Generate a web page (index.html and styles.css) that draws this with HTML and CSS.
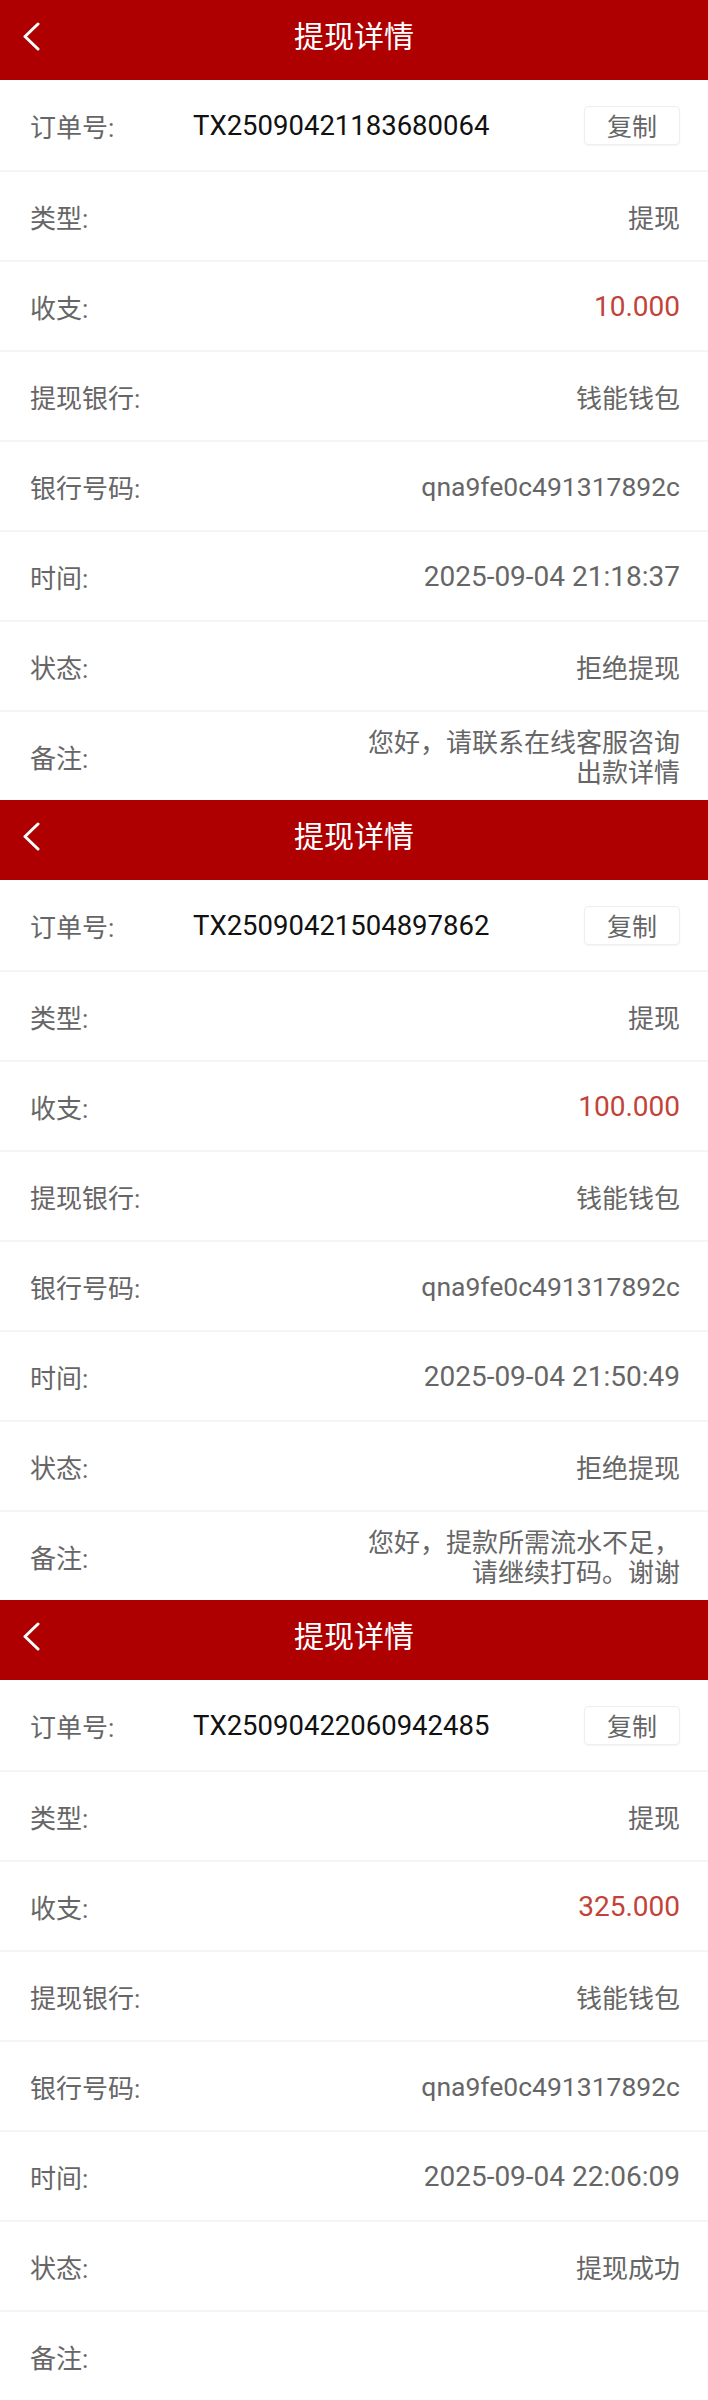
FILE: index.html
```html
<!DOCTYPE html>
<html lang="zh-CN">
  <head>
    <meta charset="UTF-8" />
    <meta name="viewport" content="width=device-width, initial-scale=1.0" />
    <title>提现详情</title>
    <link rel="stylesheet" href="styles.css">
  </head>
  <body>
    <!-- Record 1 -->
    <section class="detail">
      <header class="topbar">
        <svg class="back" width="20" height="30" viewBox="0 0 20 30"><polyline points="16,3 3,15.5 16,28" /></svg>
        <h1>提现详情</h1>
      </header>
      <div class="row">
        <span class="label">订单号:</span>
        <span class="order num">TX25090421183680064</span>
        <button class="copy">复制</button>
      </div>
      <div class="row"><span class="label">类型:</span><span class="value">提现</span></div>
      <div class="row"><span class="label">收支:</span><span class="value num amount">10.000</span></div>
      <div class="row"><span class="label">提现银行:</span><span class="value">钱能钱包</span></div>
      <div class="row"><span class="label">银行号码:</span><span class="value num code">qna9fe0c491317892c</span></div>
      <div class="row"><span class="label">时间:</span><span class="value num">2025-09-04 21:18:37</span></div>
      <div class="row"><span class="label">状态:</span><span class="value">拒绝提现</span></div>
      <div class="row"><span class="label">备注:</span><span class="value note">您好，请联系在线客服咨询出款详情</span></div>
    </section>

    <!-- Record 2 -->
    <section class="detail">
      <header class="topbar">
        <svg class="back" width="20" height="30" viewBox="0 0 20 30"><polyline points="16,3 3,15.5 16,28" /></svg>
        <h1>提现详情</h1>
      </header>
      <div class="row">
        <span class="label">订单号:</span>
        <span class="order num">TX25090421504897862</span>
        <button class="copy">复制</button>
      </div>
      <div class="row"><span class="label">类型:</span><span class="value">提现</span></div>
      <div class="row"><span class="label">收支:</span><span class="value num amount">100.000</span></div>
      <div class="row"><span class="label">提现银行:</span><span class="value">钱能钱包</span></div>
      <div class="row"><span class="label">银行号码:</span><span class="value num code">qna9fe0c491317892c</span></div>
      <div class="row"><span class="label">时间:</span><span class="value num">2025-09-04 21:50:49</span></div>
      <div class="row"><span class="label">状态:</span><span class="value">拒绝提现</span></div>
      <div class="row"><span class="label">备注:</span><span class="value note">您好，提款所需流水不足，请继续打码。谢谢</span></div>
    </section>

    <!-- Record 3 -->
    <section class="detail">
      <header class="topbar">
        <svg class="back" width="20" height="30" viewBox="0 0 20 30"><polyline points="16,3 3,15.5 16,28" /></svg>
        <h1>提现详情</h1>
      </header>
      <div class="row">
        <span class="label">订单号:</span>
        <span class="order num">TX25090422060942485</span>
        <button class="copy">复制</button>
      </div>
      <div class="row"><span class="label">类型:</span><span class="value">提现</span></div>
      <div class="row"><span class="label">收支:</span><span class="value num amount">325.000</span></div>
      <div class="row"><span class="label">提现银行:</span><span class="value">钱能钱包</span></div>
      <div class="row"><span class="label">银行号码:</span><span class="value num code">qna9fe0c491317892c</span></div>
      <div class="row"><span class="label">时间:</span><span class="value num">2025-09-04 22:06:09</span></div>
      <div class="row"><span class="label">状态:</span><span class="value">提现成功</span></div>
      <div class="row"><span class="label">备注:</span><span class="value note"></span></div>
    </section>
  </body>
</html>
```

FILE: styles.css
```css
/* Page */
body {
  margin: 0;
  background: #fff;
  font-family: Roboto, "Noto Sans CJK SC", sans-serif;
  font-size: 26px;
  color: #666;
}

/* Red title bar */
.topbar {
  position: relative;
  height: 80px;
  box-sizing: border-box;
  padding-bottom: 7px;
  background-color: #ae0000;
  display: flex;
  align-items: center;
  justify-content: center;
}
.topbar h1 {
  margin: 0;
  font-size: 30px;
  font-weight: normal;
  color: #fff;
  line-height: 1;
}
.back {
  position: absolute;
  left: 22px;
  top: 21px;
}
.back polyline {
  fill: none;
  stroke: #fff;
  stroke-width: 3;
  stroke-linecap: round;
  stroke-linejoin: round;
}

/* Detail rows */
.row {
  height: 90px;
  box-sizing: border-box;
  padding: 0 28px 0 30px;
  display: flex;
  align-items: center;
  border-top: 2px solid #f5f5f5;
}
.topbar + .row {
  border-top: none;
}
.label {
  width: 163px;
  flex-shrink: 0;
  color: #666;
}
.value {
  margin-left: auto;
  text-align: right;
  color: #666;
}
.num {
  font-size: 28px;
}
.code {
  font-size: 26.5px;
}
.order {
  flex: 1;
  font-size: 27.5px;
  color: #111;
}
.amount {
  color: #c2433a;
}
.note {
  max-width: 322px;
  line-height: 30px;
  padding-top: 4px;
}

/* Copy button */
.copy {
  width: 96px;
  height: 39px;
  padding: 0;
  border: 1px solid #eee;
  border-radius: 4px;
  background: #fff;
  font-family: "Noto Sans CJK SC", sans-serif;
  font-size: 25px;
  color: #666;
  box-shadow: 0 1px 2px rgba(0, 0, 0, 0.04);
}
```
